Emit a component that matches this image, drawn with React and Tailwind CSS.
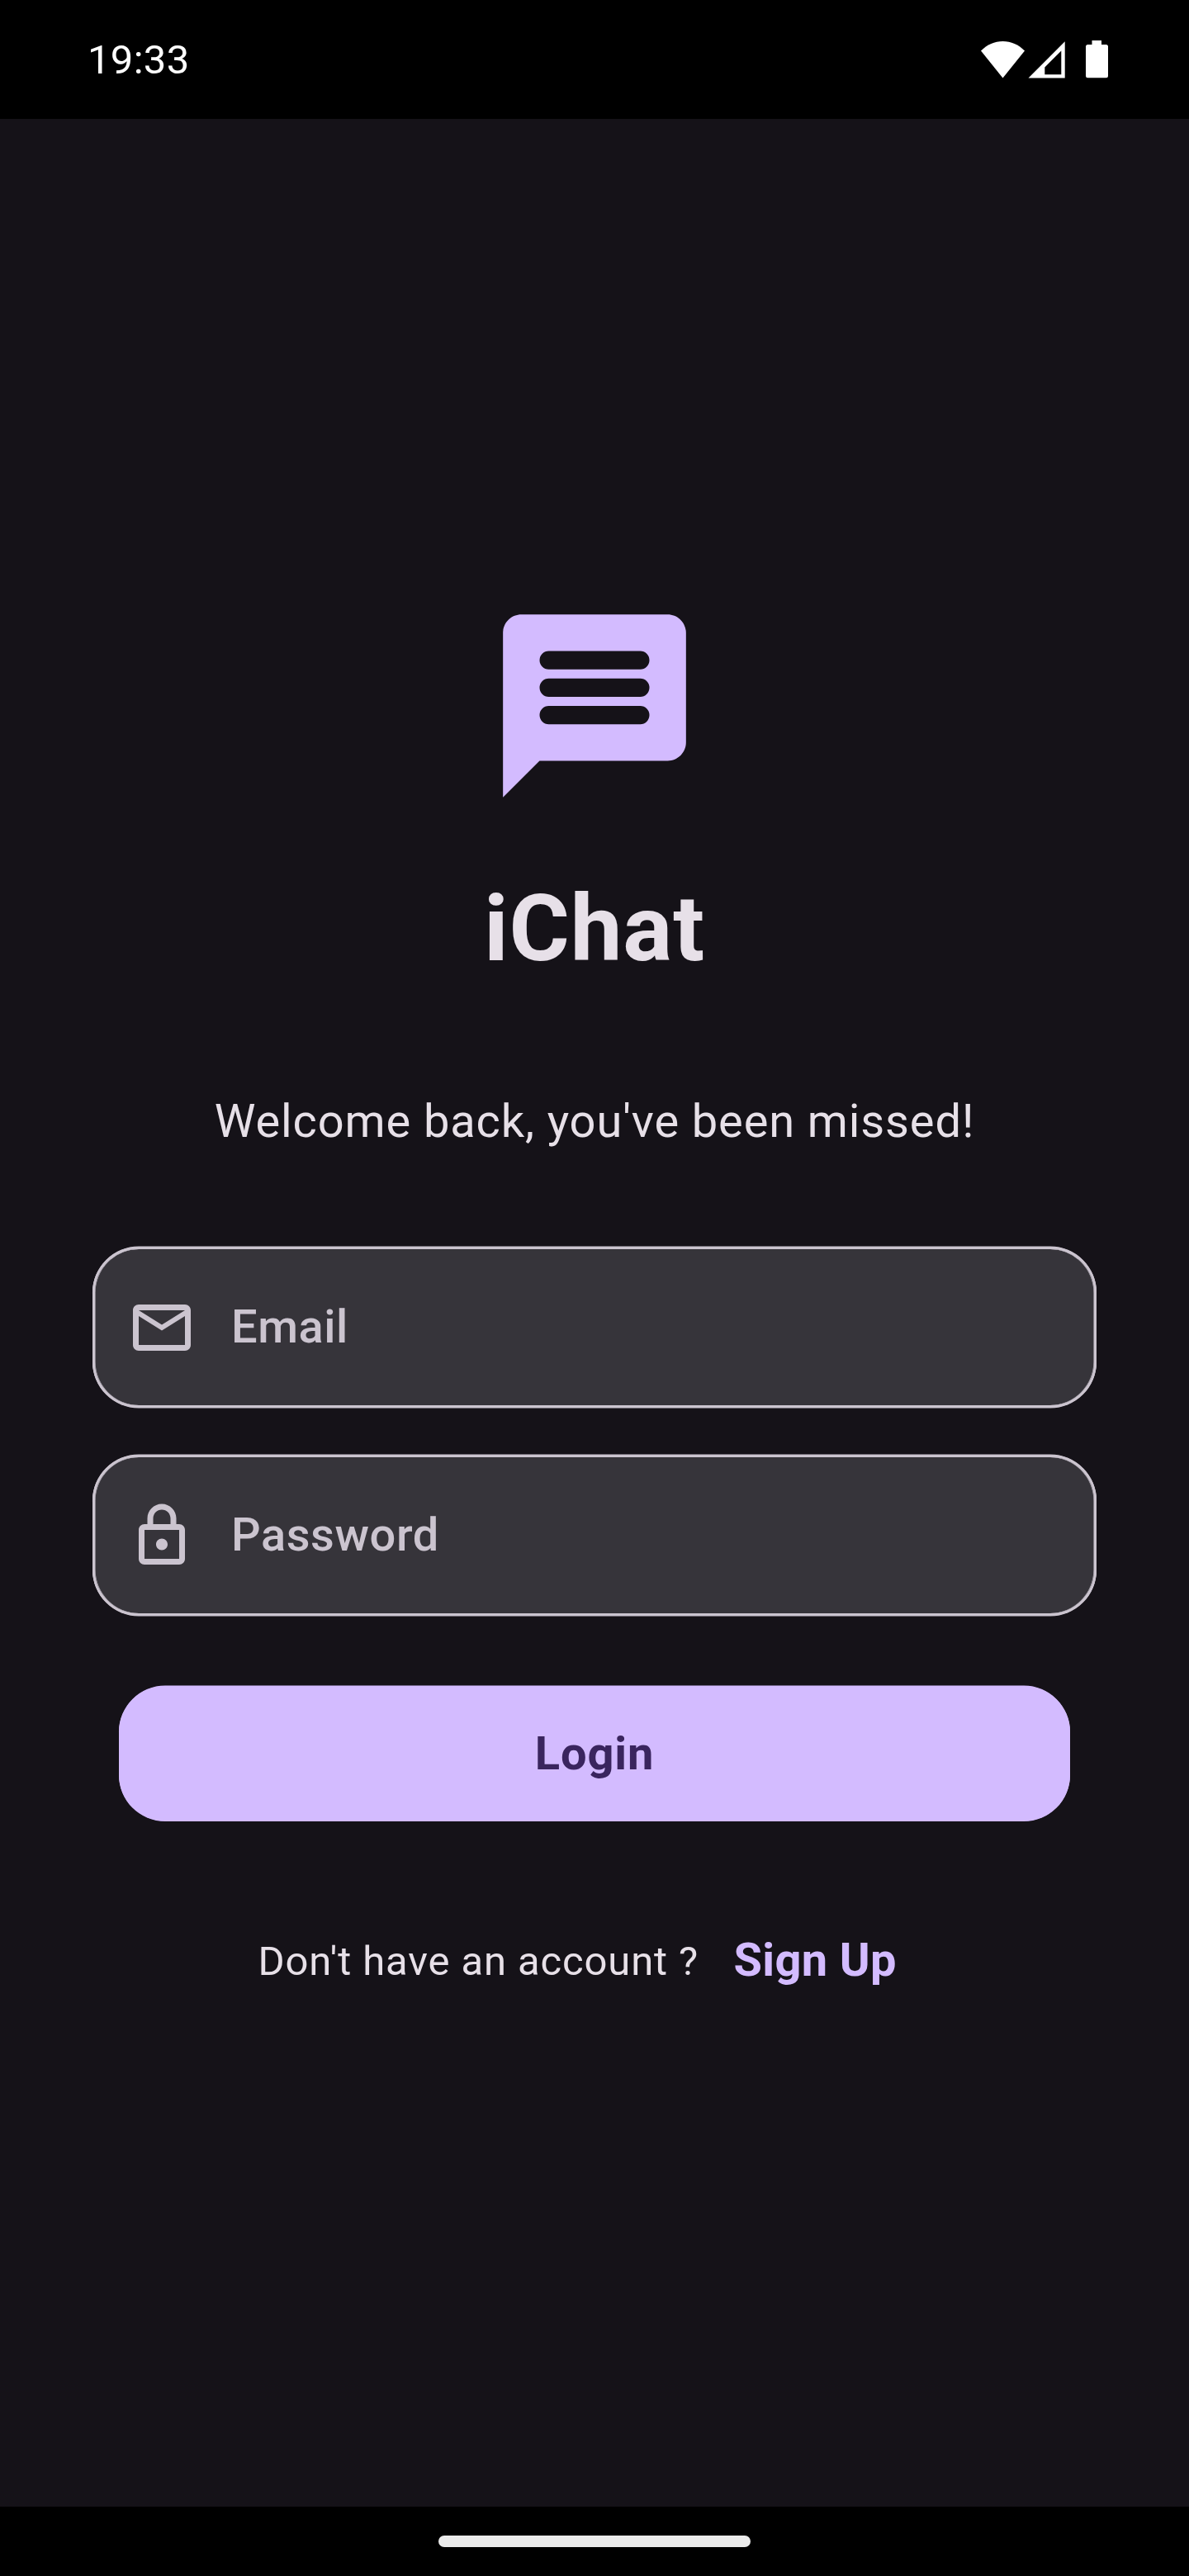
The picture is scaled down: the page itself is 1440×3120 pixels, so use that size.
function StatusBar() {
  return (
    <header className="flex h-[144px] shrink-0 items-center justify-between bg-black pl-[106px] pr-[92px] text-white">
      <span className="pt-px text-[49px] leading-[59px] tracking-[0.3px]">19:33</span>
      <svg width="162" height="50" viewBox="0 0 162 50" fill="currentColor" className="block">
        <path d="M28.500 47.400 2 14.600C9.500 7 18.500 3 28.500 3S47.500 7 55 14.600Z" />
        <path fillRule="evenodd" d="M59.500 47.500 103.700 3.300V47.500ZM79.300 34.500V43.300H99.300V14.500Z" />
        <path d="M136.500 2h11.500v5h5.500a2.500 2.500 0 0 1 2.500 2.500v35.300a2.500 2.500 0 0 1-2.500 2.500h-22a2.500 2.500 0 0 1-2.500-2.500V9.500a2.500 2.500 0 0 1 2.500-2.500h5Z" />
      </svg>
    </header>
  );
}

function ChatLogo() {
  return (
    <svg viewBox="0 0 24 24" className="mt-[578px] block size-[266px] shrink-0 text-[#d3bbff]" fill="currentColor">
      <path
        fillRule="evenodd"
        d="M20 2H4c-1.1 0-2 .9-2 2v18l4-4h14c1.1 0 2-.9 2-2V4c0-1.100-.9-2-2-2ZM17 14H7a1 1 0 0 1 0-2h10a1 1 0 0 1 0 2ZM17 11H7a1 1 0 0 1 0-2h10a1 1 0 0 1 0 2ZM17 8H7a1 1 0 0 1 0-2h10a1 1 0 0 1 0 2Z"
      />
    </svg>
  );
}

const MAIL =
  "M22 6c0-1.1-.9-2-2-2H4c-1.1 0-2 .9-2 2v12c0 1.1.9 2 2 2h16c1.1 0 2-.9 2-2V6zm-2 0l-8 5-8-5h16zm0 12H4V8l8 5 8-5v10z";
const LOCK =
  "M18 8h-1V6c0-2.760-2.240-5-5-5S7 3.240 7 6v2H6c-1.100 0-2 .9-2 2v10c0 1.100.9 2 2 2h12c1.100 0 2-.9 2-2V10c0-1.100-.9-2-2-2zM9 6c0-1.660 1.340-3 3-3s3 1.340 3 3v2H9V6zm9 14H6V10h12v10zm-6-3c1.100 0 2-.9 2-2s-.9-2-2-2-2 .9-2 2 .9 2 2 2z";

function Field({ icon, label }) {
  return (
    <label className="flex h-[195px] w-[1216px] shrink-0 items-center gap-[42px] rounded-[56px] border-[3px] border-[#cbc4cf] bg-[#36343a] pl-[39px] text-[#cbc4cf] shadow-[0_0.5px_0_0_#cbc4cf,0_-0.5px_0_0_#cbc4cf,inset_0.5px_0_0_0_#cbc4cf,inset_-0.5px_0_0_0_#cbc4cf]">
      <svg viewBox="0 0 24 24" className="block size-[84px]" fill="currentColor">
        <path d={icon} />
      </svg>
      <span className="-mt-px text-[56px] font-medium leading-[84px] tracking-[0.55px]">{label}</span>
    </label>
  );
}

export default function App() {
  return (
    <div className="flex h-[3120px] w-[1440px] flex-col overflow-hidden bg-[#151218] font-['Roboto',sans-serif] text-[#e7e0e8]">
      <StatusBar />
      <main className="flex flex-1 flex-col items-center">
        <ChatLogo />
        <h1 className="mt-[66px] text-[112px] font-bold leading-[141px] tracking-[0.875px]">iChat</h1>
        <p className="mt-[121px] text-[56px] leading-[84px] tracking-[0.875px]">Welcome back, you've been missed!</p>
        <form className="mt-[110px] flex flex-col items-center gap-[57px]">
          <Field icon={MAIL} label="Email" />
          <Field icon={LOCK} label="Password" />
          <button
            type="button"
            className="mt-[28px] h-[164px] w-[1152px] rounded-[56px] bg-[#d3bbff] text-[56px] font-bold leading-[84px] tracking-[0.875px] text-[#3a255e] shadow-[0_-0.5px_0_0_#d3bbff]"
          >
            Login
          </button>
        </form>
        <div className="mt-[126px] flex h-[84px] w-full items-center pl-[312.5px]">
          <span className="mt-[3px] w-[576px] text-[49px] leading-[71px] tracking-[0.875px]">Don't have an account ?</span>
          <a className="text-[56px] font-bold leading-[84px] tracking-[0.35px] text-[#d3bbff]">Sign Up</a>
        </div>
      </main>
      <footer className="flex h-[84px] shrink-0 items-center justify-center bg-black">
        <div className="h-[14px] w-[378px] rounded-full bg-[#ebebeb]" />
      </footer>
    </div>
  );
}
